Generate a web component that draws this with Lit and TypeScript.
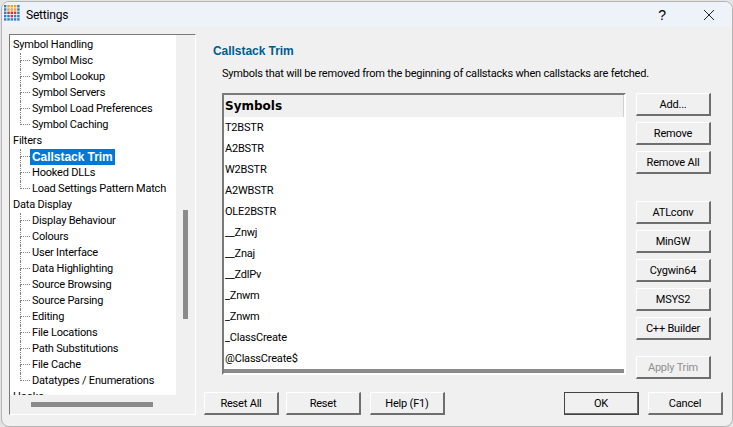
import { LitElement, html, svg, css } from 'lit';
import { customElement } from 'lit/decorators.js';

type Group = { name: string; kids: string[] };

const TREE: Group[] = [
  {
    name: 'Symbol Handling',
    kids: ['Symbol Misc', 'Symbol Lookup', 'Symbol Servers', 'Symbol Load Preferences', 'Symbol Caching'],
  },
  { name: 'Filters', kids: ['Callstack Trim', 'Hooked DLLs', 'Load Settings Pattern Match'] },
  {
    name: 'Data Display',
    kids: [
      'Display Behaviour',
      'Colours',
      'User Interface',
      'Data Highlighting',
      'Source Browsing',
      'Source Parsing',
      'Editing',
      'File Locations',
      'Path Substitutions',
      'File Cache',
      'Datatypes / Enumerations',
    ],
  },
  { name: 'Hooks', kids: [] },
];

const SYMBOLS = [
  'T2BSTR',
  'A2BSTR',
  'W2BSTR',
  'A2WBSTR',
  'OLE2BSTR',
  '__Znwj',
  '__Znaj',
  '__ZdlPv',
  '_Znwm',
  '_Znwm',
  '_ClassCreate',
  '@ClassCreate$',
];

// b = blue, o = orange, r = red
const ICON = ['booob', 'booob', 'brrrb', 'bbrbb', 'bbbbb'];
const ICON_COLORS: Record<string, string> = { b: '#2f7fbe', o: '#f0a030', r: '#d8352a' };

@customElement('app-root')
export class AppRoot extends LitElement {
  static styles = css`
    :host {
      display: block;
      width: 733px;
      height: 427px;
      overflow: hidden;
      background: #e4e4e4;
      font-family: Roboto, 'Liberation Sans', Arial, sans-serif;
      font-size: 11px;
      letter-spacing: -0.2px;
      color: #000;
    }
    .window {
      height: 426px;
      margin-left: 1px;
      margin-top: 1px;
      box-sizing: border-box;
      display: flex;
      flex-direction: column;
      background: #f0f0f0;
      border-radius: 8px;
      border: 1px solid #b4b4b4;
      overflow: hidden;
    }
    .titlebar {
      height: 25px;
      flex: none;
      display: flex;
      align-items: center;
      background: #eef2f9;
      padding-left: 2px;
    }
    .titlebar svg {
      flex: none;
    }
    .logo {
      margin-bottom: 2px;
    }
    .title {
      margin-left: 5px;
      font-size: 12px;
    }
    .help,
    .close {
      display: flex;
      align-items: center;
      justify-content: center;
    }
    .help {
      margin-left: auto;
      width: 48px;
      font-family: 'Liberation Sans', Arial, sans-serif;
      font-size: 14px;
    }
    .close {
      width: 46px;
    }
    .main {
      flex: 1;
      display: grid;
      grid-template-columns: 187px 1fr;
      padding: 7px 9px 0 7px;
      column-gap: 8px;
      min-height: 0;
    }
    .tree {
      width: 187px;
      height: 381px;
      box-sizing: border-box;
      border: 1px solid;
      border-color: #7a7a7a #fff #fff #7a7a7a;
      display: grid;
      grid-template-columns: 166px 1fr;
      grid-template-rows: 360px 1fr;
    }
    .tree-view {
      background: #fff;
      overflow: hidden;
      padding-top: 2px;
      line-height: 16px;
    }
    .node {
      height: 16px;
      padding-left: 3px;
      white-space: nowrap;
    }
    .kid {
      height: 16px;
      padding-left: 10px;
      white-space: nowrap;
      display: flex;
    }
    .twig {
      width: 10px;
      flex: none;
      display: flex;
      flex-direction: column;
    }
    .twig i {
      display: block;
      height: 8px;
      box-sizing: border-box;
      border-left: 1px dotted #808080;
    }
    .twig i:first-child {
      border-bottom: 1px dotted #808080;
    }
    .kid.last .twig i:last-child {
      border-left: none;
    }
    .label {
      padding: 0 2px;
      height: 16px;
      line-height: 16px;
    }
    .label.selected {
      background: #0078d7;
      color: #fff;
      font-family: 'Liberation Sans', Arial, sans-serif;
      font-size: 12px;
      font-weight: bold;
      letter-spacing: -0.05px;
    }
    .vbar {
      display: flex;
      justify-content: center;
    }
    .vthumb {
      width: 5px;
      height: 109px;
      margin-top: 175px;
      background: #8b8b8b;
    }
    .hbar {
      padding: 7px 0 0 21px;
    }
    .hthumb {
      width: 122px;
      height: 5px;
      background: #8b8b8b;
    }
    .panel {
      display: flex;
      flex-direction: column;
      min-width: 0;
    }
    .heading {
      font-family: 'Liberation Sans', Arial, sans-serif;
      font-weight: bold;
      color: #005c8f;
      font-size: 12px;
      letter-spacing: -0.05px;
      line-height: 14px;
      margin: 10px 0 0 9px;
    }
    .desc {
      margin: 9px 0 0 18px;
      line-height: 14px;
      white-space: nowrap;
    }
    .content {
      display: flex;
      margin: 12px 0 0 18px;
      gap: 10px;
    }
    .list {
      width: 404px;
      height: 282px;
      box-sizing: border-box;
      background: #fff;
      border: 2px solid;
      border-color: #7a7a7a #fff #fff #7a7a7a;
      display: flex;
      flex-direction: column;
    }
    .list-head {
      height: 22px;
      flex: none;
      background: #f0f0f0;
      border-right: 1px solid #d0d0d0;
      font-family: 'DejaVu Sans', Verdana, sans-serif;
      font-weight: bold;
      font-size: 12px;
      letter-spacing: 0;
      line-height: 23px;
      padding-left: 1px;
    }
    .row {
      height: 21px;
      flex: none;
      line-height: 22px;
      padding-left: 1px;
    }
    .list-foot {
      margin-top: auto;
      height: 4px;
      background: #8b8b8b;
    }
    .side {
      display: flex;
      flex-direction: column;
      width: 75px;
    }
    .btn {
      width: 75px;
      height: 23px;
      box-sizing: border-box;
      flex: none;
      background: #f0f0f0;
      border: 1px solid;
      border-color: #fff #6e6e6e #6e6e6e #fff;
      border-width: 1px 2px 2px 1px;
      display: flex;
      align-items: center;
      justify-content: center;
      color: #000;
    }
    .btn.default {
      outline: 1px solid #444;
      outline-offset: -1px;
    }
    .btn.off {
      color: #8f8f8f;
    }
    .stack {
      display: flex;
      flex-direction: column;
      gap: 6px;
    }
    .stack.tools {
      margin-top: 27px;
    }
    .apply {
      margin-top: 16px;
    }
    .footer {
      display: flex;
      margin-top: 13px;
      height: 23px;
    }
    .footer .gap {
      margin-left: 9px;
    }
    .footer .near {
      margin-left: 7px;
    }
    .footer .push {
      margin-left: auto;
    }
  `;

  renderIcon() {
    return html`<svg class="logo" width="17" height="17" viewBox="0 0 17 17">
      ${ICON.map((row, r) =>
        [...row].map(
          (c, i) => svg`<rect x=${i * 3.3} y=${r * 3.3} width="2.4" height="2.4" fill=${ICON_COLORS[c]}></rect>`
        )
      )}
    </svg>`;
  }

  render() {
    return html`
      <div class="window">
        <div class="titlebar">
          ${this.renderIcon()}
          <span class="title">Settings</span>
          <span class="help">?</span>
          <span class="close">
            <svg width="10" height="10" viewBox="0 0 10 10">
              <path d="M0 0 L10 10 M10 0 L0 10" stroke="#222" stroke-width="1" fill="none"></path>
            </svg>
          </span>
        </div>
        <div class="main">
          <div class="tree">
            <div class="tree-view">
              ${TREE.map(
                (g) => html`
                  <div class="node">${g.name}</div>
                  ${g.kids.map(
                    (k, i) => html`
                      <div class="kid ${i === g.kids.length - 1 ? 'last' : ''}">
                        <span class="twig"><i></i><i></i></span>
                        <span class="label ${k === 'Callstack Trim' ? 'selected' : ''}">${k}</span>
                      </div>
                    `
                  )}
                `
              )}
            </div>
            <div class="vbar"><div class="vthumb"></div></div>
            <div class="hbar"><div class="hthumb"></div></div>
          </div>
          <div class="panel">
            <div class="heading">Callstack Trim</div>
            <div class="desc">Symbols that will be removed from the beginning of callstacks when callstacks are fetched.</div>
            <div class="content">
              <div class="list">
                <div class="list-head">Symbols</div>
                ${SYMBOLS.map((s) => html`<div class="row">${s}</div>`)}
                <div class="list-foot"></div>
              </div>
              <div class="side">
                <div class="stack">
                  <div class="btn">Add...</div>
                  <div class="btn">Remove</div>
                  <div class="btn">Remove All</div>
                </div>
                <div class="stack tools">
                  <div class="btn">ATLconv</div>
                  <div class="btn">MinGW</div>
                  <div class="btn">Cygwin64</div>
                  <div class="btn">MSYS2</div>
                  <div class="btn">C++ Builder</div>
                </div>
                <div class="btn off apply">Apply Trim</div>
              </div>
            </div>
            <div class="footer">
              <div class="btn">Reset All</div>
              <div class="btn near">Reset</div>
              <div class="btn gap">Help (F1)</div>
              <div class="btn push default">OK</div>
              <div class="btn gap">Cancel</div>
            </div>
          </div>
        </div>
      </div>
    `;
  }
}
